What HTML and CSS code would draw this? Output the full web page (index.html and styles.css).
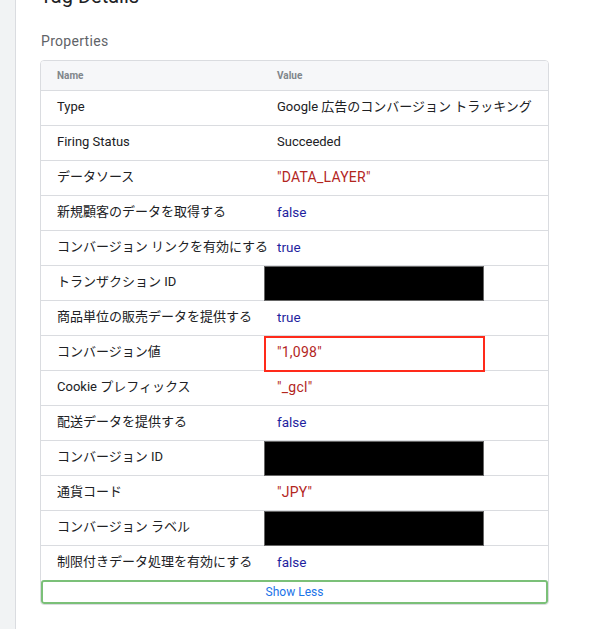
FILE: index.html
```html
<!DOCTYPE html>
<html lang="ja">
<head>
<meta charset="utf-8">
<title>Tag Details</title>
<link rel="stylesheet" href="styles.css">
</head>
<body>
<div class="layout">
  <aside class="sidebar"></aside>
  <main class="main">
    <h1 class="title">Tag Details</h1>
    <h2 class="section">Properties</h2>
    <div class="card">
      <div class="row head"><div class="cell">Name</div><div class="cell">Value</div></div>
      <div class="row"><div class="cell">Type</div><div class="cell">Google 広告のコンバージョン トラッキング</div></div>
      <div class="row"><div class="cell">Firing Status</div><div class="cell">Succeeded</div></div>
      <div class="row"><div class="cell">データソース</div><div class="cell str">"DATA_LAYER"</div></div>
      <div class="row"><div class="cell">新規顧客のデータを取得する</div><div class="cell bool">false</div></div>
      <div class="row"><div class="cell">コンバージョン リンクを有効にする</div><div class="cell bool">true</div></div>
      <div class="row"><div class="cell">トランザクション ID</div><div class="cell"><span class="redact"></span></div></div>
      <div class="row"><div class="cell">商品単位の販売データを提供する</div><div class="cell bool">true</div></div>
      <div class="row"><div class="cell">コンバージョン値</div><div class="cell str">"1,098"<span class="mark"></span></div></div>
      <div class="row"><div class="cell">Cookie プレフィックス</div><div class="cell str">"_gcl"</div></div>
      <div class="row"><div class="cell">配送データを提供する</div><div class="cell bool">false</div></div>
      <div class="row"><div class="cell">コンバージョン ID</div><div class="cell"><span class="redact"></span></div></div>
      <div class="row"><div class="cell">通貨コード</div><div class="cell str">"JPY"</div></div>
      <div class="row"><div class="cell">コンバージョン ラベル</div><div class="cell"><span class="redact"></span></div></div>
      <div class="row last"><div class="cell">制限付きデータ処理を有効にする</div><div class="cell bool">false</div></div>
      <button class="toggle">Show Less</button>
    </div>
  </main>
</div>
</body>
</html>
```
FILE: styles.css
```css
html, body {
  margin: 0;
  padding: 0;
  background: #ffffff;
}
body {
  font-family: Roboto, "Noto Sans CJK JP", "Noto Sans", sans-serif;
  color: #202124;
  overflow: hidden;
}
.layout {
  display: flex;
  min-height: 629px;
}
.sidebar {
  width: 15px;
  flex: none;
  background: #f1f3f4;
  border-right: 1px solid #dadce0;
}
.main {
  flex: 1;
  padding: 0 60px 0 24px;
}
.title {
  margin: -16px 0 0;
  font-size: 20px;
  line-height: 24px;
  font-weight: 400;
  color: #202124;
}
.section {
  margin: 23px 0 9px 1px;
  font-size: 14px;
  line-height: 20px;
  font-weight: 400;
  color: #5f6368;
  letter-spacing: 0.3px;
}
.card {
  border: 1px solid #dadce0;
  border-radius: 4px;
  overflow: hidden;
}
.row {
  display: grid;
  grid-template-columns: 220px 1fr;
  height: 34px;
  border-bottom: 1px solid #dadce0;
  font-size: 13px;
}
.row.last {
  border-bottom: none;
}
.row.head {
  height: 29px;
  background: #f6f7f9;
  font-size: 10px;
  font-weight: 700;
  color: #80868b;
}
.cell {
  position: relative;
  display: flex;
  align-items: center;
  padding: 0 16px;
  line-height: 16px;
  white-space: nowrap;
}
.row:not(.head) .cell {
  padding-bottom: 3px;
}
.str {
  color: #b3261e;
  font-size: 14px;
  letter-spacing: 0.25px;
}
.bool {
  color: #1f1fa0;
  font-size: 13.5px;
}
.redact {
  position: absolute;
  left: 3px;
  top: 0;
  width: 220px;
  height: 35px;
  background: #000;
  box-shadow: inset 0 0 0 1px #666;
}
.mark {
  position: absolute;
  left: 3px;
  top: 0;
  width: 221px;
  height: 36px;
  box-sizing: border-box;
  border: 2px solid #ff2a1a;
}
.toggle {
  display: block;
  width: 100%;
  height: 24px;
  margin: 0;
  padding: 0;
  background: #fff;
  border: 2px solid #7bc078;
  border-radius: 3px;
  font-family: Roboto, sans-serif;
  font-size: 12px;
  line-height: 18px;
  color: #1a73e8;
  cursor: pointer;
}
```
